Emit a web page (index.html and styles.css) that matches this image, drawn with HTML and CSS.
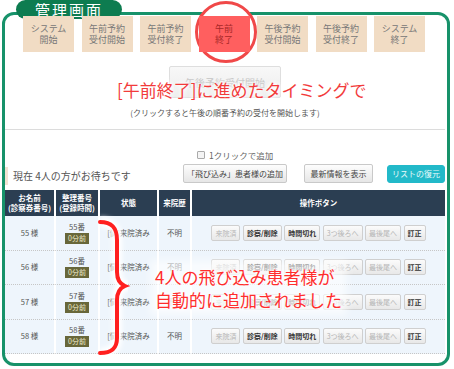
FILE: index.html
```html
<!DOCTYPE html>
<html lang="ja">
<head>
    <meta charset="UTF-8">
    <title>管理画面</title>
    <link rel="stylesheet" href="styles.css">
</head>
<body>
<div class="page">
    <div class="tab">管理画面</div>
    <div class="circle"></div>

    <div class="frame">
        <div class="steps">
            <div class="step">システム<br>開始</div>
            <div class="step">午前予約<br>受付開始</div>
            <div class="step">午前予約<br>受付終了</div>
            <div class="step step-active">午前<br>終了</div>
            <div class="step">午後予約<br>受付開始</div>
            <div class="step">午後予約<br>受付終了</div>
            <div class="step">システム<br>終了</div>
        </div>

        <div class="next">
            <div class="next-button">午後予約受付開始</div>
            <p class="note">(クリックすると午後の順番予約の受付を開始します)</p>
        </div>
        <hr class="rule">

        <label class="one-click"><span class="box"></span>1クリックで追加</label>
        <div class="tools-row">
            <div class="waiting">現在 4人の方がお待ちです</div>
            <button class="btn btn-add">「飛び込み」患者様の追加</button>
            <button class="btn btn-refresh">最新情報を表示</button>
            <button class="btn btn-teal">リストの復元</button>
        </div>

        <table class="queue">
            <thead>
                <tr>
                    <th class="c-name">お名前<br>(診察券番号)</th>
                    <th class="c-num">整理番号<br>(登録時間)</th>
                    <th class="c-state">状態</th>
                    <th class="c-hist">来院歴</th>
                    <th>操作ボタン</th>
                </tr>
            </thead>
            <tbody id="rows"></tbody>
        </table>
    </div>

    <div class="headline">[午前終了]に進めたタイミングで</div>

    <svg class="brace" width="454" height="369" viewBox="0 0 454 369">
        <defs>
            <filter id="soft"><feGaussianBlur stdDeviation="2"/></filter>
        </defs>
        <path class="brace-glow" filter="url(#soft)" d="M100,222 C112,222 117,228 117,240 L117,272 C117,280 120,284 125,286 C120,288 117,292 117,300 L117,338 C117,348 112,353 100,353"/>
        <path class="brace-line" d="M100,222 C112,222 117,228 117,240 L117,272 C117,280 120,284 125,286 C120,288 117,292 117,300 L117,338 C117,348 112,353 100,353"/>
    </svg>

    <div class="callout">4人の飛び込み患者様が<br>自動的に追加されました</div>
</div>

<script>
    // 飛び込み患者の行
    const patients = [55, 56, 57, 58];

    const actions = [
        { label: '来院済', off: true },
        { label: '診察/削除', off: false },
        { label: '時間切れ', off: false },
        { label: '3つ後ろへ', off: true },
        { label: '最後尾へ', off: true },
        { label: '訂正', off: false }
    ];

    const tbody = document.getElementById('rows');
    patients.forEach(function (no) {
        const buttons = actions.map(function (a) {
            return '<span class="act' + (a.off ? ' off' : '') + '">' + a.label + '</span>';
        }).join('');
        const tr = document.createElement('tr');
        tr.innerHTML =
            '<td>' + no + ' 様</td>' +
            '<td><div class="num">' + no + '番</div><span class="badge">0分前</span></td>' +
            '<td>[情]来院済み</td>' +
            '<td>不明</td>' +
            '<td><div class="actions">' + buttons + '</div></td>';
        tbody.appendChild(tr);
    });
</script>
</body>
</html>
```

FILE: styles.css
```css
body {
    margin: 0;
    font-family: "Noto Sans CJK JP", "Noto Sans", sans-serif;
    background-color: #fff;
}
.page {
    position: relative;
    width: 454px;
    height: 369px;
    overflow: hidden;
}
.frame {
    margin: 12px 4px 0 2px;
    height: 354px;
    box-sizing: border-box;
    border: 3px solid #17926a;
    border-radius: 12px;
    padding-right: 2px;
}
.tab {
    position: absolute;
    left: 16px;
    top: 0;
    width: 106px;
    height: 19px;
    background-color: #0d7c50;
    border-radius: 10px;
    color: #fff;
    font-size: 15px;
    line-height: 19px;
    letter-spacing: 2px;
    text-align: center;
    z-index: 2;
}
.circle {
    position: absolute;
    left: 195px;
    top: 1px;
    width: 56px;
    height: 56px;
    border: 3px solid #f04848;
    border-radius: 50%;
    background-color: #fff;
    z-index: 1;
}
.steps {
    position: relative;
    z-index: 2;
    display: flex;
    gap: 7.5px;
    padding: 1px 0 0 18px;
}
.step {
    width: 51px;
    height: 36px;
    background-color: #f1dcc4;
    color: #777;
    font-size: 9px;
    line-height: 11px;
    display: flex;
    align-items: center;
    justify-content: center;
    text-align: center;
}
.step-active {
    background-color: #ff5f5f;
    color: #a82828;
}
.next {
    display: flex;
    flex-direction: column;
    align-items: center;
}
.next-button {
    margin-top: 14px;
    width: 112px;
    height: 32px;
    box-sizing: border-box;
    border: 1px solid #dedede;
    border-radius: 2px;
    background: linear-gradient(#f8f8f8, #ececec);
    color: #c4c4c4;
    font-size: 10px;
    display: flex;
    align-items: center;
    justify-content: center;
}
.note {
    margin: 10px 0 0;
    font-size: 8px;
    line-height: 10px;
    color: #555;
}
.rule {
    margin: 11px 0 0;
    border: 0;
    border-top: 1px solid #dcdcdc;
}
.one-click {
    margin: 20px 0 0 192px;
    display: flex;
    align-items: center;
    gap: 4px;
    font-size: 8.5px;
    line-height: 10px;
    color: #666;
}
.box {
    width: 6px;
    height: 6px;
    border: 1px solid #aaa;
    border-radius: 1px;
    background-color: #f4f4f4;
}
.tools-row {
    display: flex;
    align-items: center;
    height: 19px;
    margin-top: 4px;
}
.waiting {
    flex: 1;
    height: 18px;
    line-height: 18px;
    margin-top: 4px;
    border-left: 3px solid #f2e2d2;
    padding-left: 5px;
    font-size: 10px;
    color: #555;
}
.btn {
    height: 19px;
    padding: 0;
    border: 1px solid #c9c9c9;
    border-radius: 2px;
    background: linear-gradient(#fdfdfd, #e6e6e6);
    font-family: inherit;
    font-size: 8px;
    color: #444;
}
.btn-add {
    width: 104px;
}
.btn-refresh {
    width: 69px;
    margin-left: 17px;
}
.btn-teal {
    width: 58px;
    height: 18px;
    margin-left: 14px;
    border-color: #22b9c9;
    border-radius: 3px;
    background: #22b9c9;
    color: #e8fafa;
}
.queue {
    width: 100%;
    margin-top: 7px;
    border-collapse: separate;
    border-spacing: 0;
    table-layout: fixed;
    font-size: 7.5px;
    color: #555;
}
.queue th {
    height: 26px;
    padding: 0;
    box-sizing: border-box;
    border-left: 2px solid #fff;
    background-color: #2b3e52;
    color: #fff;
    font-size: 7.5px;
    line-height: 10px;
    font-weight: bold;
}
.queue th:first-child,
.queue td:first-child {
    border-left: 0;
}
.c-name { width: 49px; }
.c-num { width: 44px; }
.c-state { width: 59px; }
.c-hist { width: 33px; }
.queue td {
    height: 33.5px;
    padding: 0;
    border-left: 2px solid #fff;
    border-bottom: 1px dotted #c6c6c6;
    background-color: #eef5fc;
    text-align: center;
    line-height: 10px;
}
.num {
    font-size: 7.5px;
}
.badge {
    display: inline-block;
    margin-top: 1px;
    padding: 0 3px;
    line-height: 11px;
    background-color: #68673a;
    color: #efeccd;
    font-size: 7px;
}
.actions {
    display: flex;
    justify-content: center;
    gap: 2.5px;
}
.act {
    height: 16px;
    box-sizing: border-box;
    padding: 0 3px;
    border: 1px solid #cfcfcf;
    border-radius: 2px;
    background: linear-gradient(#fbfbfb, #e8e8e8);
    font-size: 7px;
    line-height: 14px;
    font-weight: bold;
    color: #333;
}
.act.off {
    font-weight: normal;
    color: #b5b5b5;
}
.headline {
    position: absolute;
    left: 117px;
    top: 80px;
    z-index: 3;
    font-size: 17px;
    line-height: 20px;
    color: #f23b3b;
    white-space: nowrap;
    text-shadow: 0 0 3px #fff, 0 0 5px #fff, 0 0 8px #fff, 0 0 8px #fff;
}
.brace {
    position: absolute;
    left: 0;
    top: 0;
    z-index: 3;
    pointer-events: none;
}
.brace-glow {
    fill: none;
    stroke: #fff;
    stroke-width: 10;
}
.brace-line {
    fill: none;
    stroke: #ff1f1f;
    stroke-width: 4;
    stroke-linecap: round;
}
.callout {
    position: absolute;
    left: 155px;
    top: 265px;
    z-index: 3;
    font-size: 17px;
    line-height: 23px;
    color: #ff2d2d;
    white-space: nowrap;
    background-color: rgba(255, 255, 255, 0.6);
    box-shadow: 0 0 8px 5px rgba(255, 255, 255, 0.6);
    text-shadow: 0 0 3px #fff, 0 0 6px #fff, 0 0 10px #fff;
}
```
